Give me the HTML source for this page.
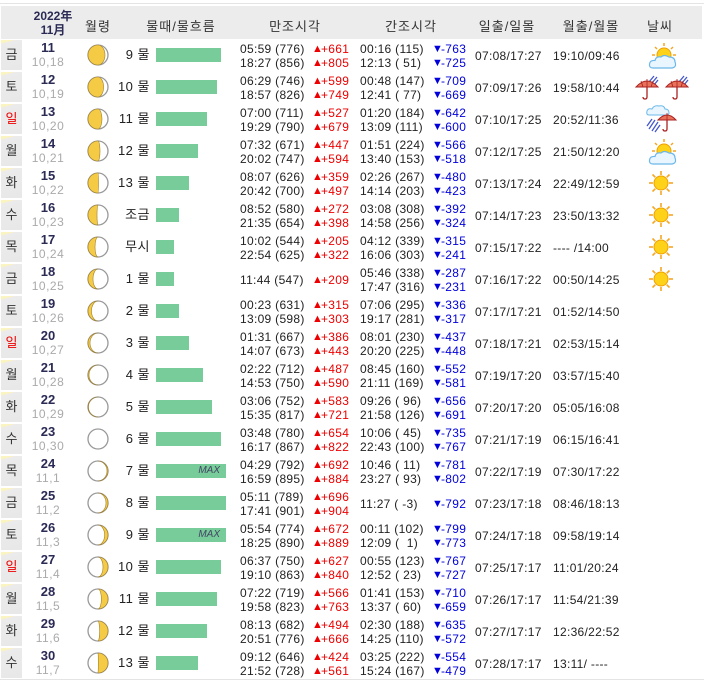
<!DOCTYPE html>
<html><head><meta charset="utf-8">
<style>
*{margin:0;padding:0;box-sizing:border-box}
body{width:704px;height:683px;background:#fff;position:relative;overflow:hidden;font-family:"Liberation Sans","Noto Sans CJK KR",sans-serif;font-size:12px;color:#222}
.top{position:absolute;left:0;top:3px;width:704px;height:1px;background:#e4e4e4}
.hd{position:absolute;left:1px;top:6px;width:701px;height:33px;background:#ececec}
.hd span{position:absolute;top:10px;font-size:13px;color:#333;letter-spacing:1px;transform:translateX(-50%);white-space:nowrap}
.hd .yr{top:3px;font-weight:bold;color:#2a2a55;font-size:12px;line-height:14px;text-align:center;letter-spacing:0}
.r{position:absolute;left:0;width:704px;height:32px}
.d{position:absolute;left:1px;top:1px;width:21px;height:30px;background:linear-gradient(165deg,#fbf3c0 0,#fbf3c0 3px,#ebebeb 4px,#e8e8e8 100%);font-size:13px;color:#333;text-align:center;line-height:30px}
.d.s{color:#e00}
.n{position:absolute;left:20px;width:56px;top:2px;text-align:center;font-weight:bold;font-size:13px;color:#2a2a55;line-height:14px}
.lu{position:absolute;left:20px;width:56px;top:17px;text-align:center;font-size:12px;color:#aaa;line-height:13px;letter-spacing:.5px}
.m{position:absolute;left:87px;top:5px;width:22px;height:22px}
.t{position:absolute;left:110px;width:40px;text-align:right;top:9px;font-size:13px;line-height:14px;color:#222;letter-spacing:.5px}
.b{position:absolute;left:156px;top:9px;height:14px;background:#77cc99}
.b i{position:absolute;right:6px;top:0;font-size:10px;color:#446;line-height:14px;font-style:italic}
.x{position:absolute;white-space:pre;line-height:14px;font-size:12px;letter-spacing:.3px}
.x s{text-decoration:none;display:inline-block;width:72px}
.x u{text-decoration:none;display:inline-block;width:9px;font-size:11px;line-height:14px;vertical-align:top}
.h{left:240px;color:#222}.h u,.h em{color:#e00}
.l{left:360px}.l u,.l em{color:#00d}
.x em{font-style:normal}
.a{top:3px}.c{top:17px}.o{top:10px}
.sr{position:absolute;left:475px;top:10px;line-height:14px;letter-spacing:.3px}
.mr{position:absolute;left:553px;top:10px;line-height:14px;letter-spacing:.3px;white-space:pre}
.w{position:absolute;top:3px}
.bot{position:absolute;left:0;top:679px;width:704px;height:1px;background:#e4e4e4}
</style></head><body>
<svg width="0" height="0" style="position:absolute">
<defs>
<symbol id="sun" viewBox="0 0 26 26"><g stroke="#f5a623" stroke-width="1.6"><line x1="13" y1="1" x2="13" y2="5"/><line x1="13" y1="21" x2="13" y2="25"/><line x1="1" y1="13" x2="5" y2="13"/><line x1="21" y1="13" x2="25" y2="13"/><line x1="4.5" y1="4.5" x2="7.3" y2="7.3"/><line x1="18.7" y1="18.7" x2="21.5" y2="21.5"/><line x1="21.5" y1="4.5" x2="18.7" y2="7.3"/><line x1="4.5" y1="21.5" x2="7.3" y2="18.7"/></g><circle cx="13" cy="13" r="7" fill="#ffd21a" stroke="#f0a000"/></symbol>
<symbol id="sc" viewBox="0 0 30 28"><g stroke="#f5a623" stroke-width="1.5"><line x1="16" y1="1" x2="16" y2="4"/><line x1="7" y1="5" x2="9" y2="7"/><line x1="25" y1="5" x2="23" y2="7"/><line x1="4" y1="13" x2="7" y2="13"/><line x1="25" y1="13" x2="28" y2="13"/></g><circle cx="16" cy="13" r="7" fill="#ffd21a" stroke="#f0a000"/><path d="M5 26 Q1 26 1.5 22 Q2 18 7 18.5 Q8 14 13 15 Q16 12 21 15 Q27 15 27 20 Q29 25 24 26 Z" fill="#eaf6ff" stroke="#6bb8ea" stroke-width="1.2"/></symbol>
<symbol id="um" viewBox="0 0 24 26"><g stroke="#4455cc" stroke-width="1.3"><line x1="14" y1="8" x2="19" y2="2"/><line x1="17" y1="9" x2="22" y2="3"/><line x1="19" y1="11" x2="23" y2="6"/></g><path d="M1 13 Q12 1 23 13 Z" fill="#e8735a" stroke="#a22" stroke-width="1"/><path d="M12 5 L12 13 M6 7 L8 13 M18 7 L16 13" stroke="#a22" stroke-width=".8"/><path d="M12 13 L12 23 Q12 25 10 25 Q8 25 8 23" fill="none" stroke="#a22" stroke-width="1.3"/></symbol>
<symbol id="cr" viewBox="0 0 32 30"><path d="M4 11 Q1 11 2 7 Q3 4 7 5 Q9 1 14 2 Q19 1 20 5 Q24 5 24 9 Q24 11 21 11 Z" fill="#eaf6ff" stroke="#6bb8ea"/><g stroke="#4455cc" stroke-width="1.3"><line x1="4" y1="25" x2="10" y2="16"/><line x1="7" y1="27" x2="13" y2="18"/><line x1="10" y1="28" x2="15" y2="21"/><line x1="2" y1="22" x2="7" y2="15"/></g><path d="M13 16 Q22 6 31 16 Z" fill="#e8735a" stroke="#a22"/><path d="M22 9 L22 16" stroke="#a22" stroke-width=".8"/><path d="M22 16 L22 25 Q22 27 20 27 Q18 27 18 25" fill="none" stroke="#a22" stroke-width="1.3"/></symbol>
</defs></svg>
<div class="top"></div>
<div class="hd">
<span class="yr" style="left:52px">2022年<br>11月</span>
<span style="left:97px">월령</span>
<span style="left:180px">물때/물흐름</span>
<span style="left:294px">만조시각</span>
<span style="left:410px">간조시각</span>
<span style="left:506px">일출/일몰</span>
<span style="left:590px">월출/월몰</span>
<span style="left:659px">날씨</span>
</div>

<div class="r" style="top:39px"><div class="d">금</div><div class="n">11</div><div class="lu">10,18</div><svg class="m" viewBox="0 0 22 22"><circle cx="11" cy="11" r="10" fill="#fff" stroke="#999" stroke-width="1.3"/><path d="M11 1 A10 10 0 0 0 11 21 A7 10 0 0 0 11 1Z" fill="#f5cb45" stroke="#a08030" stroke-width=".6"/></svg><div class="t">9 물</div><div class="b" style="width:65px"></div>
<div class="x h a"><s>05:59 (776)</s><u>▲</u><em>+661</em></div><div class="x h c"><s>18:27 (856)</s><u>▲</u><em>+805</em></div>
<div class="x l a"><s>00:16 (115)</s><u>▼</u><em>-763</em></div><div class="x l c"><s>12:13 ( 51)</s><u>▼</u><em>-725</em></div>
<div class="sr">07:08/17:27</div><div class="mr">19:10/09:46</div><svg class="w" style="left:648px" width="30" height="28"><use href="#sc"/></svg></div>

<div class="r" style="top:71px"><div class="d">토</div><div class="n">12</div><div class="lu">10,19</div><svg class="m" viewBox="0 0 22 22"><circle cx="11" cy="11" r="10" fill="#fff" stroke="#999" stroke-width="1.3"/><path d="M11 1 A10 10 0 0 0 11 21 A5.6 10 0 0 0 11 1Z" fill="#f5cb45" stroke="#a08030" stroke-width=".6"/></svg><div class="t">10 물</div><div class="b" style="width:61px"></div>
<div class="x h a"><s>06:29 (746)</s><u>▲</u><em>+599</em></div><div class="x h c"><s>18:57 (826)</s><u>▲</u><em>+749</em></div>
<div class="x l a"><s>00:48 (147)</s><u>▼</u><em>-709</em></div><div class="x l c"><s>12:41 ( 77)</s><u>▼</u><em>-669</em></div>
<div class="sr">07:09/17:26</div><div class="mr">19:58/10:44</div><svg class="w" style="left:635px;top:3px" width="24" height="26"><use href="#um"/></svg><svg class="w" style="left:665px;top:3px" width="24" height="26"><use href="#um"/></svg></div>

<div class="r" style="top:103px"><div class="d s">일</div><div class="n">13</div><div class="lu">10,20</div><svg class="m" viewBox="0 0 22 22"><circle cx="11" cy="11" r="10" fill="#fff" stroke="#999" stroke-width="1.3"/><path d="M11 1 A10 10 0 0 0 11 21 A4 10 0 0 0 11 1Z" fill="#f5cb45" stroke="#a08030" stroke-width=".6"/></svg><div class="t">11 물</div><div class="b" style="width:51px"></div>
<div class="x h a"><s>07:00 (711)</s><u>▲</u><em>+527</em></div><div class="x h c"><s>19:29 (790)</s><u>▲</u><em>+679</em></div>
<div class="x l a"><s>01:20 (184)</s><u>▼</u><em>-642</em></div><div class="x l c"><s>13:09 (111)</s><u>▼</u><em>-600</em></div>
<div class="sr">07:10/17:25</div><div class="mr">20:52/11:36</div><svg class="w" style="left:645px;top:1px" width="32" height="30"><use href="#cr"/></svg></div>

<div class="r" style="top:135px"><div class="d">월</div><div class="n">14</div><div class="lu">10,21</div><svg class="m" viewBox="0 0 22 22"><circle cx="11" cy="11" r="10" fill="#fff" stroke="#999" stroke-width="1.3"/><path d="M11 1 A10 10 0 0 0 11 21 A2 10 0 0 0 11 1Z" fill="#f5cb45" stroke="#a08030" stroke-width=".6"/></svg><div class="t">12 물</div><div class="b" style="width:42px"></div>
<div class="x h a"><s>07:32 (671)</s><u>▲</u><em>+447</em></div><div class="x h c"><s>20:02 (747)</s><u>▲</u><em>+594</em></div>
<div class="x l a"><s>01:51 (224)</s><u>▼</u><em>-566</em></div><div class="x l c"><s>13:40 (153)</s><u>▼</u><em>-518</em></div>
<div class="sr">07:12/17:25</div><div class="mr">21:50/12:20</div><svg class="w" style="left:648px" width="30" height="28"><use href="#sc"/></svg></div>

<div class="r" style="top:167px"><div class="d">화</div><div class="n">15</div><div class="lu">10,22</div><svg class="m" viewBox="0 0 22 22"><circle cx="11" cy="11" r="10" fill="#fff" stroke="#999" stroke-width="1.3"/><path d="M11 1 A10 10 0 0 0 11 21 A0.5 10 0 0 0 11 1Z" fill="#f5cb45" stroke="#a08030" stroke-width=".6"/></svg><div class="t">13 물</div><div class="b" style="width:33px"></div>
<div class="x h a"><s>08:07 (626)</s><u>▲</u><em>+359</em></div><div class="x h c"><s>20:42 (700)</s><u>▲</u><em>+497</em></div>
<div class="x l a"><s>02:26 (267)</s><u>▼</u><em>-480</em></div><div class="x l c"><s>14:14 (203)</s><u>▼</u><em>-423</em></div>
<div class="sr">07:13/17:24</div><div class="mr">22:49/12:59</div><svg class="w" style="left:648px" width="26" height="26"><use href="#sun"/></svg></div>

<div class="r" style="top:199px"><div class="d">수</div><div class="n">16</div><div class="lu">10,23</div><svg class="m" viewBox="0 0 22 22"><circle cx="11" cy="11" r="10" fill="#fff" stroke="#999" stroke-width="1.3"/><path d="M11 1 A10 10 0 0 0 11 21 A1 10 0 0 1 11 1Z" fill="#f5cb45" stroke="#a08030" stroke-width=".6"/></svg><div class="t">조금</div><div class="b" style="width:23px"></div>
<div class="x h a"><s>08:52 (580)</s><u>▲</u><em>+272</em></div><div class="x h c"><s>21:35 (654)</s><u>▲</u><em>+398</em></div>
<div class="x l a"><s>03:08 (308)</s><u>▼</u><em>-392</em></div><div class="x l c"><s>14:58 (256)</s><u>▼</u><em>-324</em></div>
<div class="sr">07:14/17:23</div><div class="mr">23:50/13:32</div><svg class="w" style="left:648px" width="26" height="26"><use href="#sun"/></svg></div>

<div class="r" style="top:231px"><div class="d">목</div><div class="n">17</div><div class="lu">10,24</div><svg class="m" viewBox="0 0 22 22"><circle cx="11" cy="11" r="10" fill="#fff" stroke="#999" stroke-width="1.3"/><path d="M11 1 A10 10 0 0 0 11 21 A3 10 0 0 1 11 1Z" fill="#f5cb45" stroke="#a08030" stroke-width=".6"/></svg><div class="t">무시</div><div class="b" style="width:18px"></div>
<div class="x h a"><s>10:02 (544)</s><u>▲</u><em>+205</em></div><div class="x h c"><s>22:54 (625)</s><u>▲</u><em>+322</em></div>
<div class="x l a"><s>04:12 (339)</s><u>▼</u><em>-315</em></div><div class="x l c"><s>16:06 (303)</s><u>▼</u><em>-241</em></div>
<div class="sr">07:15/17:22</div><div class="mr">---- /14:00</div><svg class="w" style="left:648px" width="26" height="26"><use href="#sun"/></svg></div>

<div class="r" style="top:263px"><div class="d">금</div><div class="n">18</div><div class="lu">10,25</div><svg class="m" viewBox="0 0 22 22"><circle cx="11" cy="11" r="10" fill="#fff" stroke="#999" stroke-width="1.3"/><path d="M11 1 A10 10 0 0 0 11 21 A5 10 0 0 1 11 1Z" fill="#f5cb45" stroke="#a08030" stroke-width=".6"/></svg><div class="t">1 물</div><div class="b" style="width:18px"></div>
<div class="x h o"><s>11:44 (547)</s><u>▲</u><em>+209</em></div>
<div class="x l a"><s>05:46 (338)</s><u>▼</u><em>-287</em></div><div class="x l c"><s>17:47 (316)</s><u>▼</u><em>-231</em></div>
<div class="sr">07:16/17:22</div><div class="mr">00:50/14:25</div><svg class="w" style="left:648px" width="26" height="26"><use href="#sun"/></svg></div>

<div class="r" style="top:295px"><div class="d">토</div><div class="n">19</div><div class="lu">10,26</div><svg class="m" viewBox="0 0 22 22"><circle cx="11" cy="11" r="10" fill="#fff" stroke="#999" stroke-width="1.3"/><path d="M11 1 A10 10 0 0 0 11 21 A6.5 10 0 0 1 11 1Z" fill="#f5cb45" stroke="#a08030" stroke-width=".6"/></svg><div class="t">2 물</div><div class="b" style="width:23px"></div>
<div class="x h a"><s>00:23 (631)</s><u>▲</u><em>+315</em></div><div class="x h c"><s>13:09 (598)</s><u>▲</u><em>+303</em></div>
<div class="x l a"><s>07:06 (295)</s><u>▼</u><em>-336</em></div><div class="x l c"><s>19:17 (281)</s><u>▼</u><em>-317</em></div>
<div class="sr">07:17/17:21</div><div class="mr">01:52/14:50</div></div>

<div class="r" style="top:327px"><div class="d s">일</div><div class="n">20</div><div class="lu">10,27</div><svg class="m" viewBox="0 0 22 22"><circle cx="11" cy="11" r="10" fill="#fff" stroke="#999" stroke-width="1.3"/><path d="M11 1 A10 10 0 0 0 11 21 A8 10 0 0 1 11 1Z" fill="#f5cb45" stroke="#a08030" stroke-width=".6"/></svg><div class="t">3 물</div><div class="b" style="width:33px"></div>
<div class="x h a"><s>01:31 (667)</s><u>▲</u><em>+386</em></div><div class="x h c"><s>14:07 (673)</s><u>▲</u><em>+443</em></div>
<div class="x l a"><s>08:01 (230)</s><u>▼</u><em>-437</em></div><div class="x l c"><s>20:20 (225)</s><u>▼</u><em>-448</em></div>
<div class="sr">07:18/17:21</div><div class="mr">02:53/15:14</div></div>

<div class="r" style="top:359px"><div class="d">월</div><div class="n">21</div><div class="lu">10,28</div><svg class="m" viewBox="0 0 22 22"><circle cx="11" cy="11" r="10" fill="#fff" stroke="#999" stroke-width="1.3"/><path d="M11 1 A10 10 0 0 0 11 21 A9 10 0 0 1 11 1Z" fill="#f5cb45" stroke="#a08030" stroke-width=".6"/></svg><div class="t">4 물</div><div class="b" style="width:47px"></div>
<div class="x h a"><s>02:22 (712)</s><u>▲</u><em>+487</em></div><div class="x h c"><s>14:53 (750)</s><u>▲</u><em>+590</em></div>
<div class="x l a"><s>08:45 (160)</s><u>▼</u><em>-552</em></div><div class="x l c"><s>21:11 (169)</s><u>▼</u><em>-581</em></div>
<div class="sr">07:19/17:20</div><div class="mr">03:57/15:40</div></div>

<div class="r" style="top:391px"><div class="d">화</div><div class="n">22</div><div class="lu">10,29</div><svg class="m" viewBox="0 0 22 22"><circle cx="11" cy="11" r="10" fill="#fff" stroke="#999" stroke-width="1.3"/><path d="M11 1 A10 10 0 0 0 11 21 A9.6 10 0 0 1 11 1Z" fill="#f5cb45" stroke="#a08030" stroke-width=".6"/></svg><div class="t">5 물</div><div class="b" style="width:56px"></div>
<div class="x h a"><s>03:06 (752)</s><u>▲</u><em>+583</em></div><div class="x h c"><s>15:35 (817)</s><u>▲</u><em>+721</em></div>
<div class="x l a"><s>09:26 ( 96)</s><u>▼</u><em>-656</em></div><div class="x l c"><s>21:58 (126)</s><u>▼</u><em>-691</em></div>
<div class="sr">07:20/17:20</div><div class="mr">05:05/16:08</div></div>

<div class="r" style="top:423px"><div class="d">수</div><div class="n">23</div><div class="lu">10,30</div><svg class="m" viewBox="0 0 22 22"><circle cx="11" cy="11" r="10" fill="#fff" stroke="#999" stroke-width="1.3"/></svg><div class="t">6 물</div><div class="b" style="width:65px"></div>
<div class="x h a"><s>03:48 (780)</s><u>▲</u><em>+654</em></div><div class="x h c"><s>16:17 (867)</s><u>▲</u><em>+822</em></div>
<div class="x l a"><s>10:06 ( 45)</s><u>▼</u><em>-735</em></div><div class="x l c"><s>22:43 (100)</s><u>▼</u><em>-767</em></div>
<div class="sr">07:21/17:19</div><div class="mr">06:15/16:41</div></div>

<div class="r" style="top:455px"><div class="d">목</div><div class="n">24</div><div class="lu">11,1</div><svg class="m" viewBox="0 0 22 22"><circle cx="11" cy="11" r="10" fill="#fff" stroke="#999" stroke-width="1.3"/><path d="M11 1 A10 10 0 0 1 11 21 A9 10 0 0 0 11 1Z" fill="#f5cb45" stroke="#a08030" stroke-width=".6"/></svg><div class="t">7 물</div><div class="b" style="width:70px"><i>MAX</i></div>
<div class="x h a"><s>04:29 (792)</s><u>▲</u><em>+692</em></div><div class="x h c"><s>16:59 (895)</s><u>▲</u><em>+884</em></div>
<div class="x l a"><s>10:46 ( 11)</s><u>▼</u><em>-781</em></div><div class="x l c"><s>23:27 ( 93)</s><u>▼</u><em>-802</em></div>
<div class="sr">07:22/17:19</div><div class="mr">07:30/17:22</div></div>

<div class="r" style="top:487px"><div class="d">금</div><div class="n">25</div><div class="lu">11,2</div><svg class="m" viewBox="0 0 22 22"><circle cx="11" cy="11" r="10" fill="#fff" stroke="#999" stroke-width="1.3"/><path d="M11 1 A10 10 0 0 1 11 21 A8 10 0 0 0 11 1Z" fill="#f5cb45" stroke="#a08030" stroke-width=".6"/></svg><div class="t">8 물</div><div class="b" style="width:70px"></div>
<div class="x h a"><s>05:11 (789)</s><u>▲</u><em>+696</em></div><div class="x h c"><s>17:41 (901)</s><u>▲</u><em>+904</em></div>
<div class="x l o"><s>11:27 ( -3)</s><u>▼</u><em>-792</em></div>
<div class="sr">07:23/17:18</div><div class="mr">08:46/18:13</div></div>

<div class="r" style="top:519px"><div class="d">토</div><div class="n">26</div><div class="lu">11,3</div><svg class="m" viewBox="0 0 22 22"><circle cx="11" cy="11" r="10" fill="#fff" stroke="#999" stroke-width="1.3"/><path d="M11 1 A10 10 0 0 1 11 21 A6.6 10 0 0 0 11 1Z" fill="#f5cb45" stroke="#a08030" stroke-width=".6"/></svg><div class="t">9 물</div><div class="b" style="width:70px"><i>MAX</i></div>
<div class="x h a"><s>05:54 (774)</s><u>▲</u><em>+672</em></div><div class="x h c"><s>18:25 (890)</s><u>▲</u><em>+889</em></div>
<div class="x l a"><s>00:11 (102)</s><u>▼</u><em>-799</em></div><div class="x l c"><s>12:09 (  1)</s><u>▼</u><em>-773</em></div>
<div class="sr">07:24/17:18</div><div class="mr">09:58/19:14</div></div>

<div class="r" style="top:551px"><div class="d s">일</div><div class="n">27</div><div class="lu">11,4</div><svg class="m" viewBox="0 0 22 22"><circle cx="11" cy="11" r="10" fill="#fff" stroke="#999" stroke-width="1.3"/><path d="M11 1 A10 10 0 0 1 11 21 A5 10 0 0 0 11 1Z" fill="#f5cb45" stroke="#a08030" stroke-width=".6"/></svg><div class="t">10 물</div><div class="b" style="width:65px"></div>
<div class="x h a"><s>06:37 (750)</s><u>▲</u><em>+627</em></div><div class="x h c"><s>19:10 (863)</s><u>▲</u><em>+840</em></div>
<div class="x l a"><s>00:55 (123)</s><u>▼</u><em>-767</em></div><div class="x l c"><s>12:52 ( 23)</s><u>▼</u><em>-727</em></div>
<div class="sr">07:25/17:17</div><div class="mr">11:01/20:24</div></div>

<div class="r" style="top:583px"><div class="d">월</div><div class="n">28</div><div class="lu">11,5</div><svg class="m" viewBox="0 0 22 22"><circle cx="11" cy="11" r="10" fill="#fff" stroke="#999" stroke-width="1.3"/><path d="M11 1 A10 10 0 0 1 11 21 A3.4 10 0 0 0 11 1Z" fill="#f5cb45" stroke="#a08030" stroke-width=".6"/></svg><div class="t">11 물</div><div class="b" style="width:61px"></div>
<div class="x h a"><s>07:22 (719)</s><u>▲</u><em>+566</em></div><div class="x h c"><s>19:58 (823)</s><u>▲</u><em>+763</em></div>
<div class="x l a"><s>01:41 (153)</s><u>▼</u><em>-710</em></div><div class="x l c"><s>13:37 ( 60)</s><u>▼</u><em>-659</em></div>
<div class="sr">07:26/17:17</div><div class="mr">11:54/21:39</div></div>

<div class="r" style="top:615px"><div class="d">화</div><div class="n">29</div><div class="lu">11,6</div><svg class="m" viewBox="0 0 22 22"><circle cx="11" cy="11" r="10" fill="#fff" stroke="#999" stroke-width="1.3"/><path d="M11 1 A10 10 0 0 1 11 21 A1.6 10 0 0 0 11 1Z" fill="#f5cb45" stroke="#a08030" stroke-width=".6"/></svg><div class="t">12 물</div><div class="b" style="width:51px"></div>
<div class="x h a"><s>08:13 (682)</s><u>▲</u><em>+494</em></div><div class="x h c"><s>20:51 (776)</s><u>▲</u><em>+666</em></div>
<div class="x l a"><s>02:30 (188)</s><u>▼</u><em>-635</em></div><div class="x l c"><s>14:25 (110)</s><u>▼</u><em>-572</em></div>
<div class="sr">07:27/17:17</div><div class="mr">12:36/22:52</div></div>

<div class="r" style="top:647px"><div class="d">수</div><div class="n">30</div><div class="lu">11,7</div><svg class="m" viewBox="0 0 22 22"><circle cx="11" cy="11" r="10" fill="#fff" stroke="#999" stroke-width="1.3"/><path d="M11 1 A10 10 0 0 1 11 21 A0.3 10 0 0 0 11 1Z" fill="#f5cb45" stroke="#a08030" stroke-width=".6"/></svg><div class="t">13 물</div><div class="b" style="width:42px"></div>
<div class="x h a"><s>09:12 (646)</s><u>▲</u><em>+424</em></div><div class="x h c"><s>21:52 (728)</s><u>▲</u><em>+561</em></div>
<div class="x l a"><s>03:25 (222)</s><u>▼</u><em>-554</em></div><div class="x l c"><s>15:24 (167)</s><u>▼</u><em>-479</em></div>
<div class="sr">07:28/17:17</div><div class="mr">13:11/ ----</div></div>

<div class="bot"></div>
</body></html>
